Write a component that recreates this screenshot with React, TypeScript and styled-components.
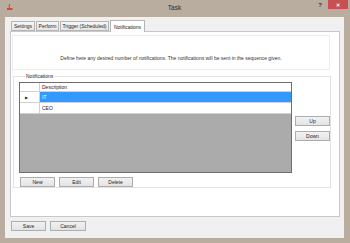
import styled, { createGlobalStyle } from 'styled-components';

const Global = createGlobalStyle`
  html, body {
    margin: 0;
    padding: 0;
    background: #b9ad9f;
  }
  * {
    box-sizing: border-box;
  }
`;

const Window = styled.div`
  width: 350px;
  height: 243px;
  background: #b9ad9f;
  display: flex;
  flex-direction: column;
  padding: 0 6px 5px 5px;
  font-family: 'Liberation Sans', Arial, sans-serif;
  font-size: 5px;
  color: #1e1e1e;
  overflow: hidden;
`;

const TitleBar = styled.div`
  height: 17px;
  position: relative;
  display: flex;
  align-items: flex-start;
  justify-content: center;
  padding-top: 4px;
`;

const Title = styled.span`
  font-size: 6.5px;
  color: #2b2b2b;
`;

const AppIcon = styled.svg`
  position: absolute;
  left: 1px;
  top: 3px;
`;

const Controls = styled.div`
  position: absolute;
  right: -4px;
  top: 0;
  display: flex;
  align-items: flex-start;
`;

const Help = styled.span`
  font-size: 6px;
  font-weight: bold;
  color: #333;
  margin-top: 2px;
  margin-right: 6px;
`;

const Close = styled.div`
  width: 20px;
  height: 9px;
  background: #c75050;
  color: #fff;
  font-size: 5px;
  font-weight: bold;
  display: flex;
  align-items: center;
  justify-content: center;
`;

const Client = styled.div`
  flex: 1;
  background: #f0f0f0;
  display: flex;
  flex-direction: column;
  padding: 3px 4px 0 5px;
`;

const TabStrip = styled.div`
  display: flex;
  align-items: flex-end;
  height: 12px;
  padding-left: 1px;
  margin-bottom: -1px;
  position: relative;
  z-index: 1;
`;

const Tab = styled.div<{ $active?: boolean; $w: number }>`
  width: ${p => p.$w}px;
  height: ${p => (p.$active ? 12 : 10)}px;
  margin-right: ${p => (p.$active ? 0 : 1)}px;
  margin-bottom: ${p => (p.$active ? 0 : 1)}px;
  background: ${p => (p.$active ? '#ffffff' : 'linear-gradient(#f6f6f6, #e6e6e6)')};
  border: 1px solid #b4b4b4;
  border-bottom: ${p => (p.$active ? 'none' : '1px solid #b4b4b4')};
  display: flex;
  align-items: center;
  justify-content: center;
  white-space: nowrap;
`;

const Panel = styled.div`
  height: 186px;
  background: #fff;
  border: 1px solid #c8c8c8;
  display: flex;
  flex-direction: column;
  padding: 3px 9px 0 1px;
`;

const InfoBox = styled.div`
  height: 35px;
  border: 1px solid #ececec;
  display: flex;
  justify-content: center;
  padding-top: 19px;
  color: #333;
`;

const GroupBox = styled.fieldset`
  margin: 4px 0 0 1px;
  padding: 3px 0 0 5px;
  height: 114px;
  border: 1px solid #e3e3e3;
`;

const Legend = styled.legend`
  padding: 0 1px;
  margin-left: 6px;
  font-size: 5px;
  line-height: 5px;
`;

const GridRow = styled.div`
  display: flex;
  align-items: flex-start;
`;

const Grid = styled.div`
  width: 273px;
  height: 91px;
  background: #ababab;
  border: 1px solid #6d6d6d;
  display: flex;
  flex-direction: column;
`;

const Row = styled.div`
  display: flex;
  height: 11px;
  background: #fff;
`;

const HeaderRow = styled(Row)`
  height: 9px;
`;

const RowHead = styled.div`
  width: 20px;
  border-right: 1px solid #d0d0d0;
  border-bottom: 1px solid #d0d0d0;
  display: flex;
  align-items: center;
  padding-left: 5px;
  font-size: 4px;
  color: #222;
`;

const Cell = styled.div<{ $selected?: boolean }>`
  flex: 1;
  border-bottom: 1px solid #d0d0d0;
  background: ${p => (p.$selected ? '#3399ff' : '#fff')};
  color: ${p => (p.$selected ? '#fff' : '#1e1e1e')};
  display: flex;
  align-items: center;
  padding-left: 2px;
`;

const SideButtons = styled.div`
  display: flex;
  flex-direction: column;
  gap: 5px;
  margin-left: 3px;
  padding-top: 34px;
`;

const Button = styled.div<{ $w?: number }>`
  width: ${p => p.$w ?? 35}px;
  height: 10px;
  border: 1px solid #adadad;
  background: linear-gradient(#f2f2f2, #e3e3e3);
  display: flex;
  align-items: center;
  justify-content: center;
`;

const BottomButtons = styled.div`
  display: flex;
  gap: 4px;
  margin-top: 4px;
  padding-left: 1px;
`;

const Footer = styled.div`
  display: flex;
  gap: 4px;
  padding: 4px 0 0 1px;
`;

export default function App() {
  return (
    <>
      <Global />
      <Window>
        <TitleBar>
          <AppIcon width="8" height="8" viewBox="0 0 8 8">
            <path d="M1 5 h5 v2 h-5 z" fill="#d04a3a" />
            <path d="M3 1 q2 1 0 2 q-1 1 1 2" stroke="#c0392b" strokeWidth="0.8" fill="none" />
            <path d="M6 5.3 q1.5 0.5 0 1.2" stroke="#d04a3a" strokeWidth="0.6" fill="none" />
          </AppIcon>
          <Title>Task</Title>
          <Controls>
            <Help>?</Help>
            <Close>✕</Close>
          </Controls>
        </TitleBar>
        <Client>
          <TabStrip>
            <Tab $w={24}>Settings</Tab>
            <Tab $w={23}>Perform</Tab>
            <Tab $w={49}>Trigger (Scheduled)</Tab>
            <Tab $w={35} $active>Notifications</Tab>
          </TabStrip>
          <Panel>
            <InfoBox>
              Define here any desired number of notifications. The notifications will be sent in the sequence given.
            </InfoBox>
            <GroupBox>
              <Legend>Notifications</Legend>
              <GridRow>
                <Grid>
                  <HeaderRow>
                    <RowHead />
                    <Cell>Description</Cell>
                  </HeaderRow>
                  <Row>
                    <RowHead>▶</RowHead>
                    <Cell $selected>IT</Cell>
                  </Row>
                  <Row>
                    <RowHead />
                    <Cell>CEO</Cell>
                  </Row>
                </Grid>
                <SideButtons>
                  <Button>Up</Button>
                  <Button>Down</Button>
                </SideButtons>
              </GridRow>
              <BottomButtons>
                <Button>New</Button>
                <Button>Edit</Button>
                <Button>Delete</Button>
              </BottomButtons>
            </GroupBox>
          </Panel>
          <Footer>
            <Button>Save</Button>
            <Button $w={36}>Cancel</Button>
          </Footer>
        </Client>
      </Window>
    </>
  );
}
